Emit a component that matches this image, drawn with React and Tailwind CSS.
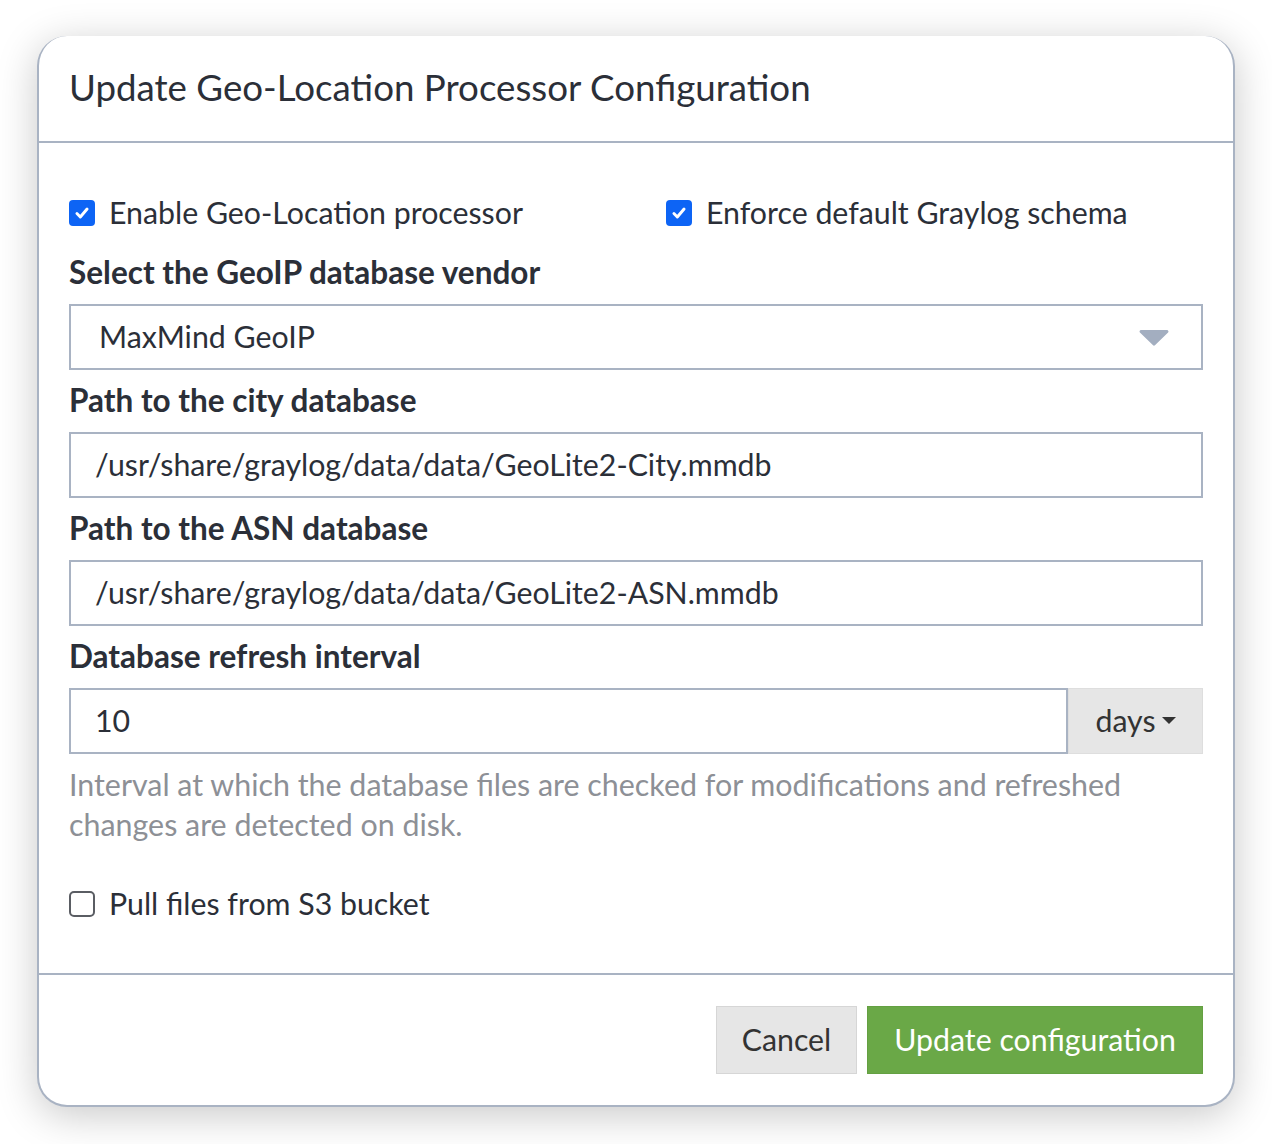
import React from 'react';

const font = { fontFamily: 'Lato, "Noto Sans", sans-serif' };

const Check = ({ checked, label }) => (
  <label className="flex items-center h-[40px] text-[30.3px] text-[#2b2f38]">
    {checked ? (
      <span className="w-[26px] h-[26px] rounded-[4px] bg-[#0d64f5] flex items-center justify-center">
        <svg width="18" height="18" viewBox="0 0 16 16" fill="none">
          <path d="M3.5 8.5l3 3 6-7" stroke="white" strokeWidth="2.6" strokeLinecap="round" strokeLinejoin="round" />
        </svg>
      </span>
    ) : (
      <span className="w-[26px] h-[26px] rounded-[5px] border-2 border-[#5a5d63] bg-white" />
    )}
    <span className="ml-[14px]">{label}</span>
  </label>
);

const Label = ({ children }) => (
  <div className="h-[40px] flex items-center font-bold text-[31.5px] text-[#2b2f38]">{children}</div>
);

const TextInput = ({ value }) => (
  <div className="h-[66px] border-2 border-[#a9b3c3] flex items-center pl-[24px] text-[30.3px] text-[#2b2f38] bg-white">
    {value}
  </div>
);

export default function App() {
  return (
    <div className="min-h-[1144px] bg-white pt-[36px] pl-[37px]" style={font}>
      <div className="w-[1198px] h-[1071px] bg-white rounded-[30px] border-x-2 border-b-2 border-[#a9b3c3] shadow-[0_8px_40px_rgba(0,0,0,0.22)] flex flex-col">
        {/* Header */}
        <div className="h-[107px] flex items-center px-[30px] border-b-2 border-[#a9b3c3] shrink-0">
          <h1 className="text-[36.7px] text-[#2b2f38] pb-[2px]">Update Geo-Location Processor Configuration</h1>
        </div>

        {/* Body */}
        <div className="px-[30px] pt-[50px] pb-[49px] border-b-2 border-[#a9b3c3] flex flex-col">
          <div className="flex">
            <div className="w-[597px]">
              <Check checked label="Enable Geo-Location processor" />
            </div>
            <Check checked label="Enforce default Graylog schema" />
          </div>

          <div className="mt-[20px]">
            <Label>Select the GeoIP database vendor</Label>
          </div>
          <div className="mt-[11px] h-[66px] border-2 border-[#a9b3c3] flex items-center justify-between pl-[28px] pr-[31px] text-[30.3px] text-[#2b2f38]">
            <span>MaxMind GeoIP</span>
            <svg width="32" height="19" viewBox="0 0 32 19">
              <path d="M3 2h26a1.5 1.5 0 0 1 1.1 2.5L17.2 17a1.6 1.6 0 0 1-2.4 0L1.9 4.5A1.5 1.5 0 0 1 3 2z" fill="#a3aec0" />
            </svg>
          </div>

          <div className="mt-[11px]">
            <Label>Path to the city database</Label>
          </div>
          <div className="mt-[11px]">
            <TextInput value="/usr/share/graylog/data/data/GeoLite2-City.mmdb" />
          </div>

          <div className="mt-[11px]">
            <Label>Path to the ASN database</Label>
          </div>
          <div className="mt-[11px]">
            <TextInput value="/usr/share/graylog/data/data/GeoLite2-ASN.mmdb" />
          </div>

          <div className="mt-[11px]">
            <Label>Database refresh interval</Label>
          </div>
          <div className="mt-[11px] flex h-[66px]">
            <div className="flex-1 border-2 border-[#a9b3c3] flex items-center pl-[24px] text-[30.3px] text-[#2b2f38]">10</div>
            <div className="w-[135px] bg-[#e6e6e6] border border-[#dedede] flex items-center justify-center gap-[6px] text-[30.3px] text-[#333]">
              <span>days</span>
              <svg width="14" height="8" viewBox="0 0 14 8">
                <path d="M0 0h14L7 7z" fill="#333" />
              </svg>
            </div>
          </div>

          <p className="mt-[10px] text-[30.4px] leading-[40px] text-[#8d9096]">
            Interval at which the database files are checked for modifications and refreshed changes are detected on disk.
          </p>

          <div className="mt-[40px]">
            <Check label="Pull files from S3 bucket" />
          </div>
        </div>

        {/* Footer */}
        <div className="flex-1 flex items-center justify-end gap-[10px] px-[30px]">
          <button className="h-[68px] w-[141px] bg-[#e6e6e6] border border-[#d6d6d6] text-[30.3px] text-[#333]">Cancel</button>
          <button className="h-[68px] w-[336px] bg-[#6aa847] border border-[#64a042] text-[30.3px] text-white">Update configuration</button>
        </div>
      </div>
    </div>
  );
}
